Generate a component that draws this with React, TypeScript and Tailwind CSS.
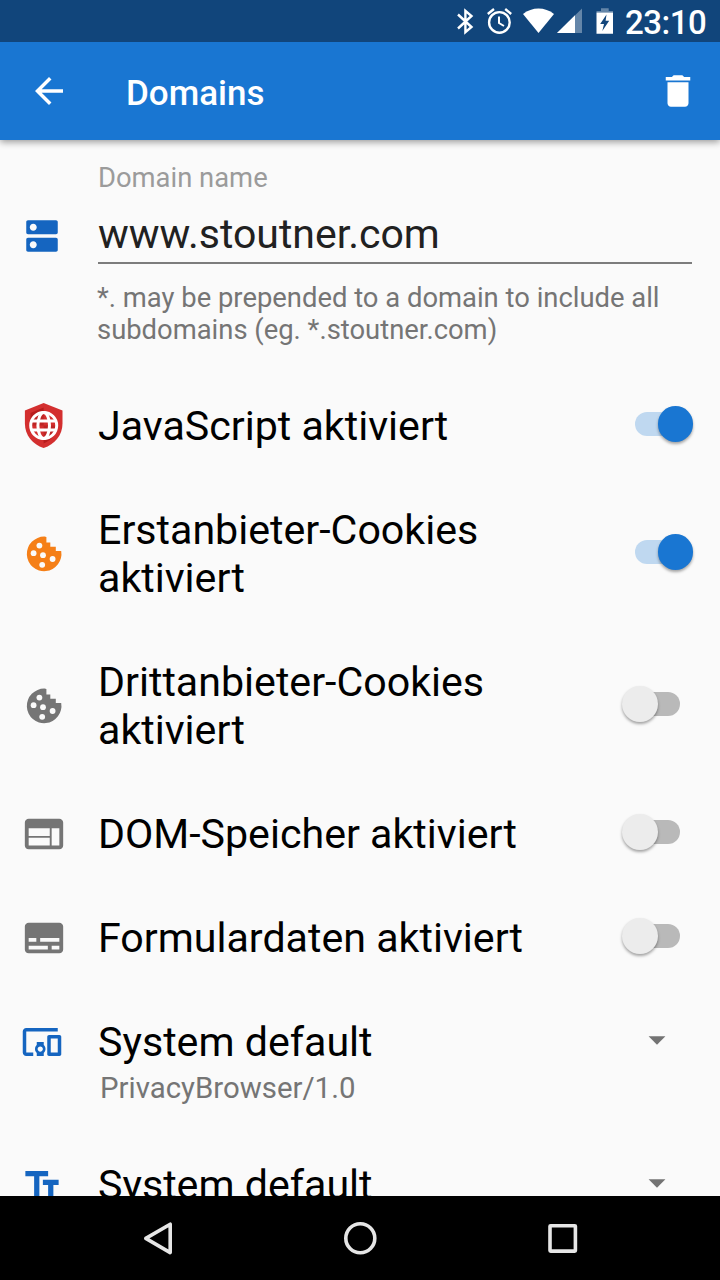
import type { ReactNode } from "react";
import { MdArrowBack, MdDelete, MdDevicesOther, MdDns, MdSubtitles, MdTextFields, MdWeb } from "react-icons/md";

function StatusBar() {
  return (
    <div className="relative z-20 flex h-[42px] shrink-0 items-center justify-end bg-[#11457b] text-white">
      <svg width="180" height="42" viewBox="440 0 180 42" fill="none">
        <path d="M458 14.5 L471.5 27 L465.4 32.2 V10.8 L471.5 16 L458 28.5" stroke="white" strokeWidth="2.4" />
        <circle cx="499.4" cy="22.4" r="10.3" stroke="white" strokeWidth="2.4" />
        <path d="M499 16.5 V23 L504 26" stroke="white" strokeWidth="2" />
        <path d="M487.8 14 L494 9 M505.2 9 L511.2 14" stroke="white" strokeWidth="2.4" />
        <path d="M523 14 C532 6.6 545 6.6 554 14 L538.5 33 Z" fill="white" />
        <path d="M582 8.5 V33 H557 Z" fill="white" fillOpacity=".35" />
        <path d="M575 15.3 V33 H557 Z" fill="white" />
        <path d="M601 8.3 H608.7 V11 H613 V12.5 H596.5 V11 H601 Z" fill="white" fillOpacity=".35" />
        <path fillRule="evenodd" d="M596.5 12.5 H613 V33.8 H596.5 Z M606.5 14.5 L600.2 24 H604 L602.3 31 L609.2 20.8 H605.6 Z" fill="white" />
      </svg>
      <span className="w-[100px] pl-[5px] pt-[3px] text-[33px] font-medium leading-[39px] tracking-[-0.5px]">23:10</span>
    </div>
  );
}

function AppBar() {
  return (
    <header className="relative z-10 flex h-[98px] shrink-0 items-center bg-[#1976d2] pl-7 pr-[21px] text-white shadow-[0_2px_7px_rgba(0,0,0,0.4)]">
      <MdArrowBack size={42} />
      <h1 className="ml-14 mt-1.5 flex-1 text-[35px] font-medium leading-[42px]">Domains</h1>
      <MdDelete size={42} />
    </header>
  );
}

function ShieldIcon() {
  return (
    <svg width="46" height="48" viewBox="0 0 46 48">
      <path d="M22.6 1 L41.5 8.5 V21.5 C41.5 33 33.7 42.5 22.6 46 C11.5 42.5 3.9 33 3.9 21.5 V8.5 Z" fill="#d32f2f" />
      <path d="M22.6 5.5 L9.5 11 V28 L22.6 20 Z M22.6 20 L36.2 22 C35.7 31 31 38 22.6 41.5 Z" fill="#b71c1c" />
      <circle cx="22.7" cy="23.5" r="13" fill="#d32f2f" />
      <path d="M22.7 10.5 V23.5 H9.7 C9.7 16 15.7 10.5 22.7 10.5 Z M22.7 23.5 H35.7 C35.7 31 29.7 36.5 22.7 36.5 Z" fill="#bd2525" />
      <g fill="none" stroke="white" strokeWidth="3">
        <circle cx="22.7" cy="23.5" r="13" />
        <ellipse cx="22.7" cy="23.5" rx="5.8" ry="13" />
        <path d="M10.2 19 H35.2 M10.2 28 H35.2" />
      </g>
    </svg>
  );
}

function CookieIcon({ color }: { color: string }) {
  return (
    <svg className="-mt-px" width="46" height="46" viewBox="0 0 46 46">
      <path d="M23.5 5.6 A17.3 17.3 0 1 0 40.2 20 H34.8 V15.8 H29.3 V11.6 H25.4 V5.9 Z" fill={color} />
      <g fill="#fafafa">
        <circle cx="18.4" cy="14.6" r="2.9" />
        <circle cx="12.6" cy="22.2" r="2.9" />
        <circle cx="22" cy="24.2" r="2.9" />
        <circle cx="31.6" cy="28" r="2.9" />
        <circle cx="21.2" cy="33.8" r="2.9" />
      </g>
    </svg>
  );
}

function Switch({ on }: { on: boolean }) {
  return (
    <div
      role="switch"
      aria-checked={on}
      className={`-mt-[5px] flex h-6 w-[45px] shrink-0 items-center rounded-full ${on ? "justify-end bg-[#bfd8f0]" : "justify-start bg-[#b9b9b9]"}`}
    >
      <div
        className={`mt-px size-[35.5px] shrink-0 rounded-full shadow-[0_2px_3px_rgba(0,0,0,0.35)] ${on ? "-mr-[13px] bg-[#1976d2]" : "-ml-[13px] bg-[#ececec]"}`}
      />
    </div>
  );
}

function SettingRow({ icon, label, on }: { icon: ReactNode; label: string; on: boolean }) {
  return (
    <div className="flex items-center py-7 pl-[21px] pr-10">
      <div className="-ml-[0.5px] flex w-[46px] shrink-0 justify-center">{icon}</div>
      <div className="ml-[31.5px] w-[450px] text-[41.15px] leading-[48px] text-black">{label}</div>
      <div className="ml-auto">
        <Switch on={on} />
      </div>
    </div>
  );
}

function SpinnerRow({ icon, label, detail }: { icon: ReactNode; label: string; detail?: string }) {
  return (
    <div className="pb-[27px] pl-[21px] pt-7">
      <div className="flex items-center">
        <div className="flex w-[42px] shrink-0 justify-center">{icon}</div>
        <div className="ml-[35px] flex-1 text-[41.15px] leading-[48px] text-black">{label}</div>
        <svg className="mr-[54px] -mt-1" width="18" height="9" viewBox="0 0 18 9">
          <path d="M.6 .3 H17.4 L9 8.7 Z" fill="#737373" />
        </svg>
      </div>
      {detail && <div className="h-10 pl-[79px] pt-0.5 text-[29.4px] leading-10 text-[#757575]">{detail}</div>}
    </div>
  );
}

function NavBar() {
  return (
    <nav className="flex h-[84px] shrink-0 justify-center bg-black">
      <svg width="440" height="84" viewBox="140 0 440 84" fill="none" stroke="#e6e6e6" strokeWidth="3.6" strokeLinejoin="round">
        <path d="M145.8 42.4 L170.2 28.2 V56.6 Z" />
        <circle cx="360.3" cy="42.3" r="14.5" />
        <rect x="550" y="29.7" width="25.4" height="25.4" rx=".6" />
      </svg>
    </nav>
  );
}

export default function App() {
  return (
    <div className="flex h-[1280px] w-[720px] flex-col overflow-hidden bg-[#fafafa] font-['Roboto',sans-serif]">
      <StatusBar />
      <AppBar />
      <main className="min-h-0 flex-1 overflow-hidden">
        <section className="flex h-[234px] pl-[21px] pr-7">
          <div className="w-[42px] shrink-0 pt-[75px] text-[#1565c0]">
            <MdDns size={42} />
          </div>
          <div className="ml-[35px] flex-1">
            <div className="pt-[22px] text-[27.4px] leading-[33px] text-[#9b9b9b]">Domain name</div>
            <div className="mt-[15px] h-[54px] border-b-2 border-[#7c7c7c] text-[41px] leading-[48px] text-[#212121]">www.stoutner.com</div>
            <p className="-ml-px mt-[18px] text-[27.4px] leading-8 text-[#757575]">
              *. may be prepended to a domain to include all
              <br />
              subdomains (eg. *.stoutner.com)
            </p>
          </div>
        </section>
        <SettingRow icon={<ShieldIcon />} label="JavaScript aktiviert" on />
        <SettingRow icon={<CookieIcon color="#f57f17" />} label="Erstanbieter-Cookies aktiviert" on />
        <SettingRow icon={<CookieIcon color="#757575" />} label="Drittanbieter-Cookies aktiviert" on={false} />
        <SettingRow icon={<MdWeb className="-mt-px" size={46} color="#757575" />} label="DOM-Speicher aktiviert" on={false} />
        <SettingRow icon={<MdSubtitles className="-mt-px" size={46} color="#757575" />} label="Formulardaten aktiviert" on={false} />
        <SpinnerRow icon={<MdDevicesOther size={42} color="#1565c0" />} label="System default" detail="PrivacyBrowser/1.0" />
        <SpinnerRow icon={<MdTextFields size={42} color="#1565c0" />} label="System default" />
      </main>
      <NavBar />
    </div>
  );
}
